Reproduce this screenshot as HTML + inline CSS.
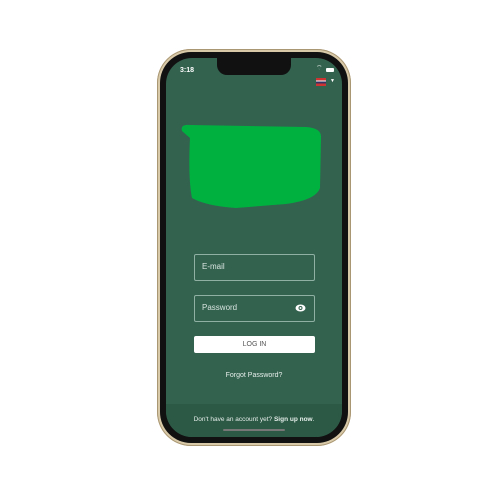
<!DOCTYPE html><html><head><style>
body{margin:0;width:500px;height:500px;background:#fff;position:relative;overflow:hidden;font-family:"Liberation Sans",sans-serif}
.frame{position:absolute;left:157px;top:49px;width:194px;height:397px;border-radius:34px;background:#d8c9a8;box-shadow:inset 0 0 0 1px #a99672}
.bez{position:absolute;left:160px;top:52px;width:188px;height:391px;border-radius:31px;background:#111}
.scr{position:absolute;left:166px;top:58px;width:176px;height:379px;border-radius:26px;background:#33624f;overflow:hidden}
.notch{position:absolute;left:51px;top:0;width:74px;height:17px;background:#111;border-radius:0 0 10px 10px}
.t{position:absolute;color:#fff}
.field{position:absolute;left:28px;width:119px;height:25px;border:1px solid #8fb0a3;border-radius:2px}
.bar{position:absolute;left:0;top:346px;width:176px;height:40px;background:#2c5946}
</style></head><body>
<div class="frame"></div><div class="bez"></div>
<div class="scr">
<div class="notch"></div>
<div class="t" style="left:14px;top:9px;font-size:7px;font-weight:bold">3:18</div>
<div style="position:absolute;left:160px;top:10px;width:8px;height:4px;background:#fff;border-radius:1px"></div>
<div class="t" style="left:150px;top:6px;font-size:7px">⌔</div>
<div style="position:absolute;left:150px;top:20px;width:10px;height:8px;background:linear-gradient(#c33 0 30%,#fff 30% 45%,#336 45% 70%,#c33 70%)"></div>
<div class="t" style="left:164px;top:20px;font-size:5px">▼</div>
<svg style="position:absolute;left:0;top:0" width="176" height="379"><path d="M16 73 Q14 66 24 67 L140 69 Q156 70 155 80 L154 130 Q150 142 120 146 L70 150 Q40 148 26 140 Q22 120 24 80 Z" fill="#00b140"/></svg>
<div class="field" style="top:196px"><span class="t" style="left:7px;top:7px;font-size:8px;color:#d8e4df">E-mail</span></div>
<div class="field" style="top:237px"><span class="t" style="left:7px;top:7px;font-size:8px;color:#d8e4df">Password</span>
<svg style="position:absolute;left:100px;top:8px" width="11" height="8"><ellipse cx="5.5" cy="4" rx="5" ry="3.5" fill="#fff"/><circle cx="5.5" cy="4" r="2" fill="#33624f"/><circle cx="5.5" cy="4" r="1" fill="#fff"/></svg></div>
<div style="position:absolute;left:28px;top:278px;width:121px;height:17px;background:#fff;border-radius:2px;font-size:7px;color:#555;text-align:center;line-height:17px">LOG IN</div>
<div class="t" style="left:0;width:176px;text-align:center;top:314px;font-size:7px;color:#e6eeea">Forgot Password?</div>
<div class="bar"></div>
<div class="t" style="left:0;width:176px;text-align:center;top:358px;font-size:6.5px;color:#e6eeea">Don't have an account yet? <b>Sign up now</b>.</div>
<div style="position:absolute;left:57px;top:371px;width:62px;height:2px;background:#777;border-radius:1px"></div>
</div>
</body></html>
